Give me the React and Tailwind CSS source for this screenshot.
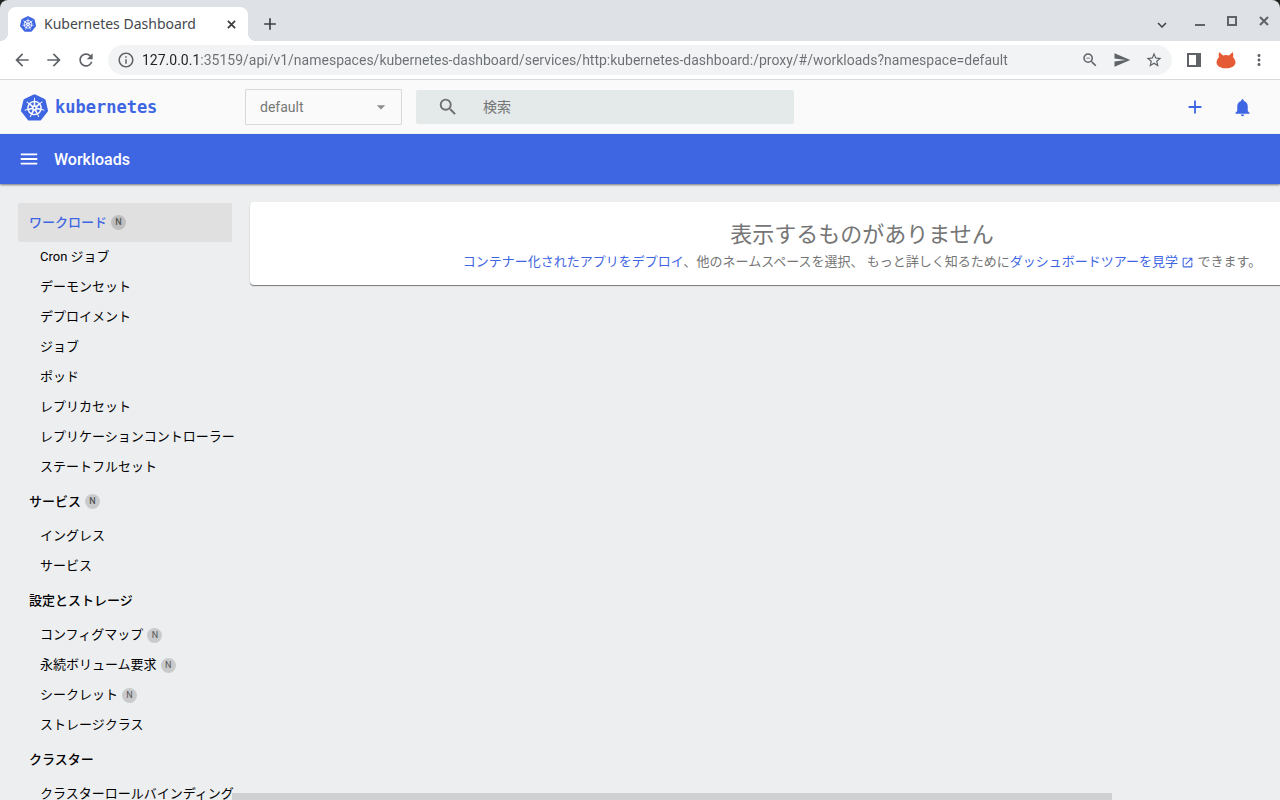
import { MdAdd, MdArrowBack, MdArrowDropDown, MdArrowForward, MdInfoOutline, MdKeyboardArrowDown, MdMenu, MdMoreVert, MdNotifications, MdOpenInNew, MdRefresh, MdSearch, MdSend, MdStarBorder, MdZoomOut } from 'react-icons/md'
import { SiKubernetes } from 'react-icons/si'

const sections = [
  { title: 'ワークロード', badge: true, active: true, items: [
    ['Cron ジョブ'], ['デーモンセット'], ['デプロイメント'], ['ジョブ'], ['ポッド'],
    ['レプリカセット'], ['レプリケーションコントローラー'], ['ステートフルセット'],
  ] },
  { title: 'サービス', badge: true, items: [['イングレス'], ['サービス']] },
  { title: '設定とストレージ', items: [
    ['コンフィグマップ', true], ['永続ボリューム要求', true], ['シークレット', true], ['ストレージクラス'],
  ] },
  { title: 'クラスター', items: [['クラスターロールバインディング']] },
]

function Badge() {
  return (
    <span className="ml-1 flex h-[15px] w-[15px] shrink-0 items-center justify-center rounded-full bg-black/15 text-[9px] leading-none text-[#555]">N</span>
  )
}

function Cross({ size }) {
  return (
    <svg width={size} height={size} viewBox="0 0 10 10" fill="none" stroke="currentColor" strokeWidth="2">
      <path d="M1 1l8 8M9 1l-8 8" />
    </svg>
  )
}

function TabStrip() {
  return (
    <div className="flex h-[41px] shrink-0 items-end rounded-t-lg bg-[#dee1e6] pl-2 pr-[11px]">
      <div className="relative flex h-[34px] w-60 items-center rounded-t-lg bg-white pl-3 pr-3">
        <span className="absolute -left-2 bottom-0 h-2 w-2 bg-[radial-gradient(circle_at_0_0,transparent_8px,white_8px)]" />
        <span className="absolute -right-2 bottom-0 h-2 w-2 bg-[radial-gradient(circle_at_100%_0,transparent_8px,white_8px)]" />
        <SiKubernetes size={16} color="#3f66e2" />
        <span className="ml-2 flex-1 whitespace-nowrap font-['Noto_Sans',sans-serif] text-sm text-[#45494d]">Kubernetes Dashboard</span>
        <button aria-label="Close tab" className="text-[#3c4043]"><Cross size={9} /></button>
      </div>
      <button aria-label="New tab" className="mb-[7px] ml-3 text-[#3c4043]"><MdAdd size={20} /></button>
      <div className="ml-auto flex h-10 items-center text-[#5f6368]">
        <button aria-label="Search tabs" className="mr-6 mt-2 text-[#3c4043]"><MdKeyboardArrowDown size={18} /></button>
        <button aria-label="Minimize" className="mr-[22px] mt-2 h-[2px] w-[10px] bg-[#5f6368]" />
        <button aria-label="Maximize" className="mr-[22px] h-[10px] w-[10px] border-2 border-[#5f6368]" />
        <button aria-label="Close window"><Cross size={10} /></button>
      </div>
    </div>
  )
}

function Toolbar() {
  return (
    <div className="flex h-[39px] shrink-0 items-center border-b border-[#d8dadd] bg-white pl-3 pr-3 text-[#5f6368]">
      <div className="flex gap-3">
        <button aria-label="Back"><MdArrowBack size={20} /></button>
        <button aria-label="Forward"><MdArrowForward size={20} /></button>
        <button aria-label="Reload"><MdRefresh size={20} /></button>
      </div>
      <div className="ml-3 flex h-[30px] flex-1 items-center rounded-full bg-[#f1f3f4] pl-[9px] pr-[9px]">
        <MdInfoOutline size={18} className="shrink-0" />
        <input
          aria-label="Address"
          className="ml-[7px] min-w-0 flex-1 bg-[linear-gradient(90deg,#202124_58px,#6b6e72_58px)] bg-clip-text font-[Roboto,sans-serif] text-sm text-transparent outline-none"
          defaultValue="127.0.0.1:35159/api/v1/namespaces/kubernetes-dashboard/services/http:kubernetes-dashboard:/proxy/#/workloads?namespace=default"
        />
        <div className="flex gap-[14px]">
          <button aria-label="Zoom"><MdZoomOut size={18} /></button>
          <button aria-label="Send"><MdSend size={18} /></button>
          <button aria-label="Bookmark"><MdStarBorder size={18} /></button>
        </div>
      </div>
      <button aria-label="Side panel" className="ml-[15px] h-[14px] w-[14px] border-2 border-r-[5px] border-[#5f6368]" />
      <button aria-label="Profile" className="ml-[15px]">
        <svg width="20" height="18" viewBox="0 0 20 18" fill="#e55b35">
          <path d="M3.2 1 7 4.4Q10 3.6 13 4.4L16.800 1Q17.600 3.500 17.100 6.300 19.500 8.300 19.500 11C19.500 15 15.500 17.300 10 17.300S.5 15 .5 11Q.5 8.300 2.900 6.300 2.400 3.500 3.200 1Z" />
        </svg>
      </button>
      <button aria-label="Menu" className="ml-[14px]"><MdMoreVert size={18} /></button>
    </div>
  )
}

function Header() {
  return (
    <header className="flex h-[54px] shrink-0 items-center bg-[#fafafa] pl-[21px] pr-[27px] text-[#3f66e2]">
      <a href="#overview" className="flex w-[224px] items-center">
        <SiKubernetes size={27} />
        <span className="ml-[7px] font-['DejaVu_Sans_Mono',monospace] text-[17px] font-bold leading-6">kubernetes</span>
      </a>
      <div className="relative h-9 w-[157px]">
        <select aria-label="Namespace" className="h-full w-full appearance-none rounded-[1px] border border-[#d8d8d8] bg-transparent px-[14px] text-sm text-[#777] outline-none">
          <option>default</option>
        </select>
        <MdArrowDropDown size={20} className="pointer-events-none absolute right-[11px] top-2 text-[#8c8c8c]" />
      </div>
      <div className="ml-[14px] flex h-[34px] w-[378px] items-center rounded-[2px] bg-[#e4e9e9] pl-[21px]">
        <MdSearch size={22} className="shrink-0 text-[#6d6d6d]" />
        <input aria-label="検索" placeholder="検索" className="ml-6 min-w-0 flex-1 bg-transparent text-sm outline-none placeholder:text-[#757575]" />
      </div>
      <div className="ml-auto flex items-center gap-[26px]">
        <button aria-label="Create"><MdAdd size={22} /></button>
        <button aria-label="Notifications"><MdNotifications size={21} /></button>
      </div>
    </header>
  )
}

function Sidebar() {
  return (
    <nav className="w-[232px] shrink-0 whitespace-nowrap pl-[18px] pt-[19px] text-[13px] leading-5 text-black">
      {sections.map(s => (
        <section key={s.title}>
          <a href="#section" className={`flex h-[39px] items-center pl-[11px] font-medium ${s.active ? 'rounded-l-[2px] bg-[#e0e0e0] text-[#3f66e2]' : ''}`}>
            {s.title}
            {s.badge && <Badge />}
          </a>
          <ul>
            {s.items.map(([label, badge]) => (
              <li key={label}>
                <a href="#item" className="flex h-[30px] items-center pl-[22px]">
                  {label}
                  {badge && <Badge />}
                </a>
              </li>
            ))}
          </ul>
        </section>
      ))}
    </nav>
  )
}

export default function App() {
  return (
    <div className="flex h-screen flex-col overflow-hidden bg-[#222]">
      <TabStrip />
      <Toolbar />
      <div className="flex min-h-0 flex-1 flex-col bg-[#edeef0] font-[Roboto,'Noto_Sans_CJK_JP',sans-serif]">
        <Header />
        <div className="z-10 flex h-[50px] shrink-0 items-center bg-[#3f66e2] pl-[18px] text-white shadow-[0_1px_2px_rgba(0,0,0,0.5)]">
          <button aria-label="Toggle navigation"><MdMenu size={22} /></button>
          <h1 className="ml-[14px] pt-px text-base font-medium">Workloads</h1>
        </div>
        <div className="flex min-h-0 flex-1">
          <Sidebar />
          <main className="flex min-w-0 flex-1 flex-col justify-between overflow-x-clip pt-[18px]">
            <div className="mx-[18px] min-w-[1224px] rounded bg-white pb-[13px] pt-[17px] text-center text-[#757575] shadow-[0_1px_1px_rgba(0,0,0,0.5)]">
              <h2 className="text-[22px] leading-8">表示するものがありません</h2>
              <p className="text-[13px] leading-[21px]">
                <a href="#deploy" className="text-[#3f66e2]">コンテナー化されたアプリをデプロイ</a>、他のネームスペースを選択、 もっと詳しく知るために
                <a href="#tour" className="text-[#3f66e2]">ダッシュボードツアーを見学 <MdOpenInNew size={13} className="inline" /></a> できます。
              </p>
            </div>
            <div className="h-[7px] w-[84%] bg-[#cfd0d2]" />
          </main>
        </div>
      </div>
    </div>
  )
}
